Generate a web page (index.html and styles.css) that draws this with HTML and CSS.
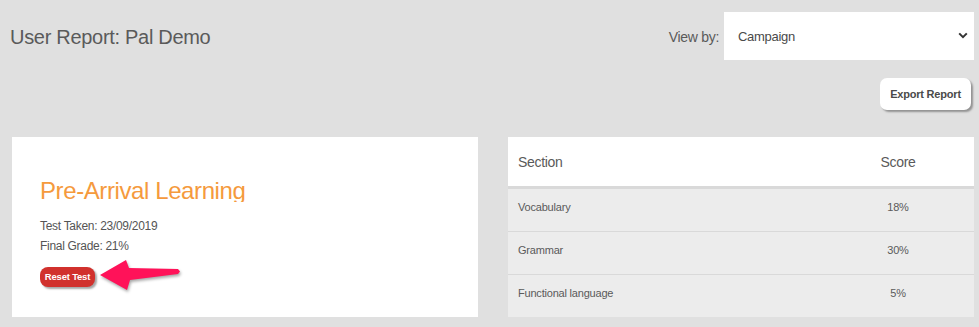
FILE: index.html
```html
<!DOCTYPE html>
<html lang="en">
<head>
<meta charset="utf-8">
<title>User Report: Pal Demo</title>
<link rel="stylesheet" href="styles.css">
</head>
<body>
<div class="page">
  <header class="top">
    <h1 class="page-title">User Report: Pal Demo</h1>
    <div class="view-by">
      <label class="view-label" for="viewby">View by:</label>
      <div class="select-wrap">
        <select id="viewby" class="select">
          <option>Campaign</option>
        </select>
        <svg class="chev" width="10" height="7" viewBox="0 0 10 7"><path d="M1.2 1.4 L5 5.2 L8.8 1.4" fill="none" stroke="#333" stroke-width="2"/></svg>
      </div>
    </div>
  </header>
  <div class="actions">
    <button class="export-btn">Export Report</button>
  </div>
  <main class="cards">
    <section class="card course">
      <h2 class="course-title">Pre-Arrival Learning</h2>
      <p class="meta">Test Taken: 23/09/2019<br>Final Grade: 21%</p>
      <div class="reset-row">
        <button class="reset-btn">Reset Test</button>
        <svg class="arrow" width="90" height="40" viewBox="0 0 90 40"><polygon points="2,20 28,5 31,13 80,14 82,16.5 80,19 32,25 29,35" fill="#ff1259"/></svg>
      </div>
    </section>
    <section class="card scores">
      <div class="row head"><span>Section</span><span class="num">Score</span></div>
      <div class="row"><span>Vocabulary</span><span class="num">18%</span></div>
      <div class="row"><span>Grammar</span><span class="num">30%</span></div>
      <div class="row"><span>Functional language</span><span class="num">5%</span></div>
    </section>
  </main>
</div>
</body>
</html>
```

FILE: styles.css
```css
html, body {
  margin: 0;
  padding: 0;
  background: #e0e0e0;
}
body {
  font-family: "Liberation Sans", Arial, sans-serif;
  color: #555;
}
.page {
  padding: 12px 5px 0 10px;
}
.top {
  display: flex;
  align-items: center;
  justify-content: space-between;
  height: 48px;
}
.page-title {
  margin: 0;
  padding-top: 3px;
  font-weight: normal;
  font-size: 20px;
  letter-spacing: -0.3px;
  color: #5a5a5a;
}
.view-by {
  display: flex;
  align-items: center;
}
.view-label {
  padding-top: 1px;
  font-size: 14px;
  letter-spacing: -0.3px;
  color: #5a5a5a;
  margin-right: 5px;
}
.select-wrap {
  position: relative;
  width: 250px;
  height: 48px;
}
.select {
  appearance: none;
  -webkit-appearance: none;
  width: 100%;
  height: 100%;
  border: 0;
  background: #fff;
  padding: 0 0 0 14px;
  font-family: inherit;
  font-size: 13px;
  letter-spacing: -0.3px;
  color: #4a4a4a;
  outline: none;
}
.chev {
  position: absolute;
  right: 6px;
  top: 20px;
  pointer-events: none;
}
.actions {
  display: flex;
  justify-content: flex-end;
  margin-top: 18px;
  padding-right: 3px;
}
.export-btn {
  width: 91px;
  height: 32px;
  border: 0;
  border-radius: 7px;
  background: #fff;
  box-shadow: 2px 2px 2px rgba(0,0,0,0.35);
  font-family: inherit;
  font-weight: bold;
  font-size: 11px;
  letter-spacing: -0.2px;
  color: #4a4a4a;
  padding: 0;
  white-space: nowrap;
}
.cards {
  display: grid;
  grid-template-columns: 466px 466px;
  column-gap: 30px;
  align-items: start;
  margin-top: 27px;
  padding-left: 2px;
}
.card {
  background: #fff;
  height: 180px;
  box-sizing: border-box;
}
.course {
  padding: 43px 28px 0 28px;
}
.course-title {
  margin: 0;
  font-weight: normal;
  font-size: 24px;
  letter-spacing: -0.4px;
  line-height: 22px;
  height: 22px;
  overflow: hidden;
  color: #f59a3d;
}
.meta {
  margin: 14px 0 0 0;
  font-size: 12px;
  letter-spacing: -0.3px;
  line-height: 20px;
  color: #555;
}
.reset-row {
  position: relative;
  margin-top: 10px;
}
.reset-btn {
  height: 20px;
  width: 55px;
  border: 0;
  border-radius: 8px;
  background: #d1312d;
  color: #fff;
  font-family: inherit;
  font-weight: bold;
  font-size: 9.5px;
  letter-spacing: -0.2px;
  padding: 0;
  white-space: nowrap;
  box-shadow: 2px 2px 2px rgba(0,0,0,0.35);
}
.arrow {
  position: absolute;
  left: 58px;
  top: -11px;
  filter: drop-shadow(1px 2px 1.5px rgba(0,0,0,0.35));
}
.scores {
  background: #ececec;
  display: flex;
  flex-direction: column;
}
.row {
  flex: none;
  display: grid;
  grid-template-columns: 1fr 152px;
  height: 43px;
  box-sizing: border-box;
  padding: 8px 0 0 10px;
  font-size: 11px;
  letter-spacing: -0.2px;
  line-height: 20px;
  color: #5a5a5a;
  border-top: 1px solid #d9d9d9;
}
.row.head {
  background: #fff;
  height: 52px;
  padding-top: 14px;
  font-size: 14px;
  letter-spacing: -0.3px;
  line-height: 22px;
  border-top: 0;
  border-bottom: 3px solid #d9d9d9;
}
.row.head + .row {
  border-top: 0;
  height: 42px;
}
.num {
  text-align: center;
}
```
